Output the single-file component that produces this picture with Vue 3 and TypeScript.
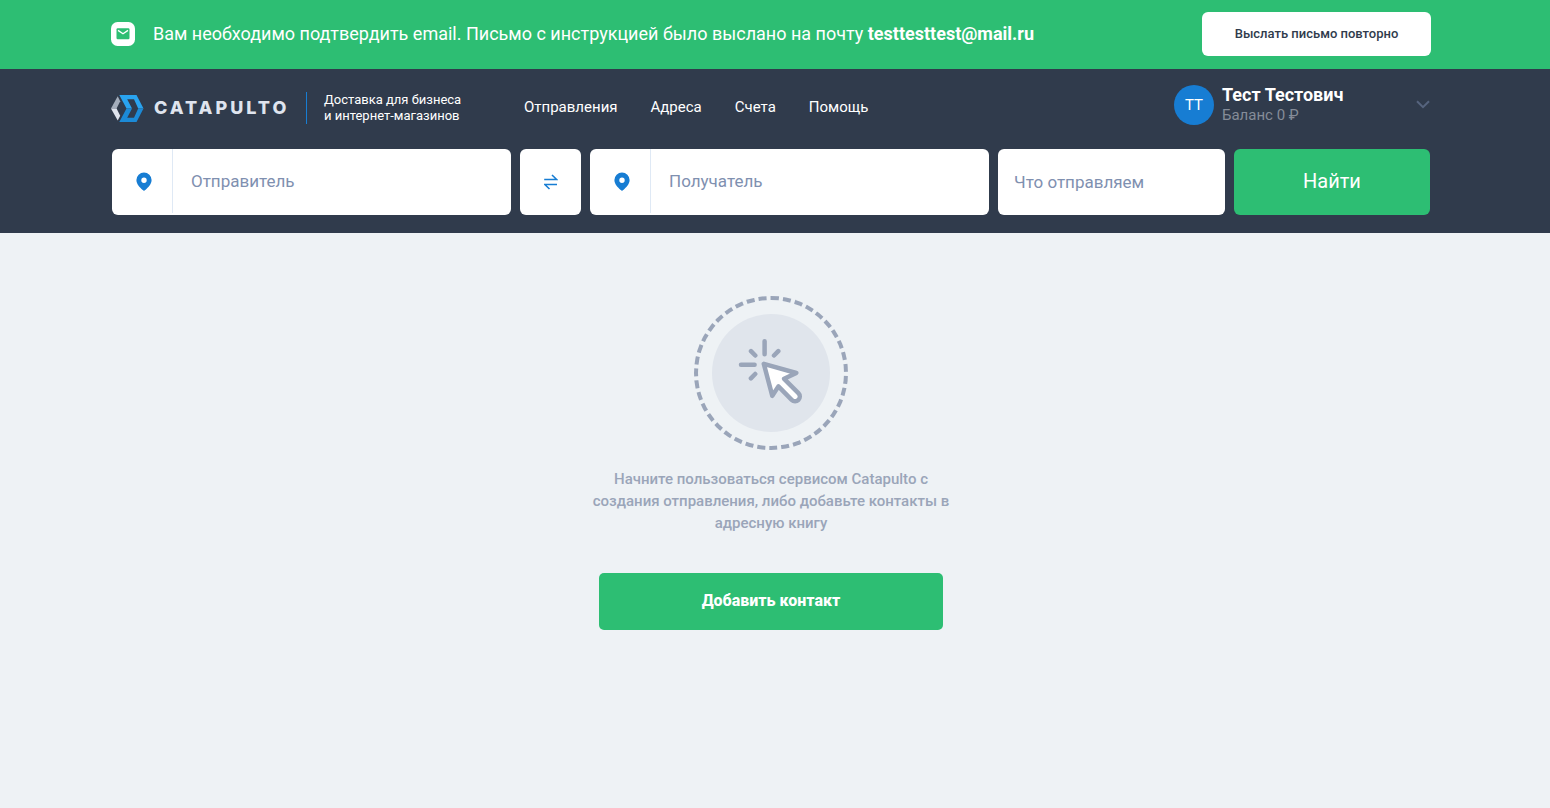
<script setup lang="ts">
import { ref } from 'vue'

interface NavItem {
  label: string
  href: string
}

const navItems: NavItem[] = [
  { label: 'Отправления', href: '#shipments' },
  { label: 'Адреса', href: '#addresses' },
  { label: 'Счета', href: '#invoices' },
  { label: 'Помощь', href: '#help' },
]

const email = 'testtesttest@mail.ru'
const sender = ref('')
const recipient = ref('')
const cargo = ref('')

const pinPath =
  'M8 .5A7.6 7.6 0 0 0 .4 8.1c0 4 3.2 7.2 6.3 10a2 2 0 0 0 2.6 0c3.1-2.8 6.3-6 6.3-10A7.6 7.6 0 0 0 8 .5zm0 5a2.7 2.7 0 1 1 0 5.4 2.7 2.7 0 0 1 0-5.4z'

function swapPoints(): void {
  const previous = sender.value
  sender.value = recipient.value
  recipient.value = previous
}
</script>

<template>
  <div class="page">
    <div class="notice">
      <div class="container notice-row">
        <svg class="notice-icon" viewBox="0 0 24 24" aria-hidden="true">
          <rect width="24" height="24" rx="6.5" fill="#fff" />
          <rect x="5.5" y="6.3" width="13" height="11" rx="1.2" fill="#2dbe73" />
          <path d="M7 8.4l5 3.4 5-3.4" fill="none" stroke="#fff" stroke-width="1.3" />
        </svg>
        <p class="notice-text">
          Вам необходимо подтвердить email. Письмо с инструкцией было выслано на почту
          <strong>{{ email }}</strong>
        </p>
        <button class="resend" type="button">Выслать письмо повторно</button>
      </div>
    </div>

    <header class="header">
      <div class="container top-row">
        <a class="logo" href="#home">
          <svg class="logo-mark" viewBox="0 0 33 27" aria-hidden="true">
            <path d="M6.7 1.3L0 13.5h5.6l3.6-7.2z" fill="#a3adbb" />
            <path d="M0 13.5l6.7 12 2.5-4.8-3.6-7.2z" fill="#dfe4ee" />
            <path d="M8.3 0h17.2l7 13.5h-5.3L23 4.2h-6.8l4.8 9.3h-5.5z" fill="#29a3ef" />
            <path d="M8.3 27h17.2l7-13.5h-5.3L23 22.8h-6.8l4.8-9.3h-5.5z" fill="#1c8ad6" />
          </svg>
          <span class="logo-name">CATAPULTO</span>
        </a>
        <p class="tagline">Доставка для бизнеса<br />и интернет-магазинов</p>
        <nav class="nav">
          <a v-for="item in navItems" :key="item.href" :href="item.href">{{ item.label }}</a>
        </nav>
        <button class="user" type="button">
          <span class="avatar">ТТ</span>
          <span class="user-info">
            <span class="user-name">Тест Тестович</span>
            <span class="user-balance">Баланс 0 ₽</span>
          </span>
          <svg class="chevron" viewBox="0 0 14 9" aria-hidden="true">
            <path d="M1 1.2l6 6 6-6" fill="none" stroke="#56647e" stroke-width="2" />
          </svg>
        </button>
      </div>

      <form class="container search" @submit.prevent>
        <label class="point">
          <span class="point-icon">
            <svg viewBox="0 0 16 19" aria-hidden="true">
              <path :d="pinPath" fill="#177dd3" />
            </svg>
          </span>
          <input v-model="sender" type="text" placeholder="Отправитель" aria-label="Отправитель" />
        </label>
        <button class="swap" type="button" aria-label="Поменять местами" @click="swapPoints">
          <svg viewBox="0 0 14 16" aria-hidden="true">
            <path d="M.2 5.5h12.500L8 1M13 10.500H.8L5.500 15" fill="none" stroke="#177dd3" stroke-width="1.600" />
          </svg>
        </button>
        <label class="point">
          <span class="point-icon">
            <svg viewBox="0 0 16 19" aria-hidden="true">
              <path :d="pinPath" fill="#177dd3" />
            </svg>
          </span>
          <input v-model="recipient" type="text" placeholder="Получатель" aria-label="Получатель" />
        </label>
        <input v-model="cargo" class="cargo" type="text" placeholder="Что отправляем" aria-label="Что отправляем" />
        <button class="find" type="submit">Найти</button>
      </form>
    </header>

    <main class="empty">
      <div class="ring">
        <div class="disc">
          <svg viewBox="18 18 118 118" aria-hidden="true">
            <g fill="none" stroke="#9aa5b9" stroke-width="4.5" stroke-linecap="round" stroke-linejoin="round">
              <path d="M70.6 45.3v13M47 68.7h13.6M57 55.2l4.3 4.3M80 59.5l4.3-4.3M61.2 78l-4.3 4.3" />
              <path d="M69.8 67.8l32.5 9.2-12.2 5.8 14.3 14.3a4.7 4.7 0 0 1-6.7 6.7L84.4 90.4 78.3 99.8z" fill="#fff" />
            </g>
          </svg>
        </div>
      </div>
      <p class="empty-text">
        Начните пользоваться сервисом Catapulto с создания отправления, либо добавьте контакты в адресную книгу
      </p>
      <button class="add" type="button">Добавить контакт</button>
    </main>
  </div>
</template>

<style>
html,
body {
  margin: 0;
  background: #eef2f5;
}
</style>

<style scoped>
.page {
  min-height: 100vh;
  font-family: Roboto, "Liberation Sans", sans-serif;
  color: #fff;
  background: #eef2f5;
}

.page * {
  box-sizing: border-box;
}

p {
  margin: 0;
}

button,
input {
  min-width: 0;
  border: 0;
  padding: 0;
  font-family: inherit;
}

button {
  cursor: pointer;
}

a {
  color: inherit;
  text-decoration: none;
}

svg {
  display: block;
  flex: none;
}

.notice,
.header,
.empty {
  padding-right: 8px;
}

.container {
  max-width: 1320px;
  margin: 0 auto;
}

.notice {
  background: #2dbe73;
}

.notice-row {
  display: flex;
  align-items: center;
  min-height: 69px;
  padding-bottom: 1px;
}

.notice-icon {
  width: 24px;
  height: 24px;
}

.notice-text {
  flex: 1;
  margin-left: 18px;
  font-size: 18px;
  line-height: 24px;
}

.notice-text strong {
  font-weight: 700;
}

.resend {
  width: 229px;
  height: 44px;
  padding-bottom: 2px;
  border-radius: 6px;
  background: #fff;
  color: #303b4c;
  font-size: 13px;
  font-weight: 500;
}

.header {
  padding-bottom: 18px;
  background: #303b4c;
}

.top-row {
  display: flex;
  align-items: center;
  height: 80px;
  padding-bottom: 3px;
}

.logo {
  display: flex;
  align-items: center;
  width: 195px;
  padding-top: 1px;
}

.logo-mark {
  width: 33px;
  height: 27px;
}

.logo-name {
  margin-left: 10px;
  color: #dfe4ee;
  font-family: Inter, Roboto, sans-serif;
  font-size: 18px;
  font-weight: 800;
  line-height: 24px;
  letter-spacing: 3px;
}

.tagline {
  width: 218px;
  padding-left: 17px;
  border-left: 1px solid #177dd3;
  font-size: 13px;
  line-height: 16px;
}

.nav {
  display: flex;
  flex: 1;
  gap: 33px;
  padding-bottom: 2px;
  font-size: 15px;
  line-height: 20px;
}

.user {
  display: flex;
  align-items: center;
  align-self: flex-start;
  width: 257px;
  margin-top: 15px;
  padding-right: 1px;
  background: none;
  color: #fff;
  text-align: left;
}

.avatar {
  display: grid;
  place-items: center;
  width: 40px;
  height: 40px;
  border-radius: 50%;
  background: #177dd3;
  font-size: 15px;
}

.user-info {
  display: flex;
  flex: 1;
  flex-direction: column;
  margin-left: 8px;
  padding-top: 1px;
}

.user-name {
  font-size: 18px;
  font-weight: 700;
  line-height: 20px;
}

.user-balance {
  color: #858c98;
  font-size: 15px;
  line-height: 20px;
}

.chevron {
  width: 14px;
  height: 9px;
}

.search {
  display: grid;
  grid-template-columns: 399fr 61fr 399fr 227fr 196fr;
  gap: 9px;
  padding: 0 1px;
}

.search > * {
  height: 66px;
  border-radius: 6px;
  background: #fff;
}

.point {
  display: flex;
  overflow: hidden;
}

.point-icon {
  display: grid;
  place-items: center;
  flex: none;
  width: 61px;
  height: 64px;
  padding-left: 4px;
  border-right: 1px solid #dfe9f5;
}

.point-icon svg {
  width: 16px;
  height: 19px;
}

.point input {
  flex: 1;
  padding: 0 18px 2px;
  background: none;
}

.search input {
  color: #303b4c;
  font-size: 17px;
}

.search input::placeholder {
  color: #7f90b0;
  opacity: 1;
}

.cargo {
  padding: 0 16px;
}

.swap {
  display: grid;
  place-items: center;
}

.swap svg {
  width: 14px;
  height: 16px;
}

.search .find {
  padding-bottom: 3px;
  background: #2dbe73;
  color: #fff;
  font-size: 20px;
}

.empty {
  display: flex;
  flex-direction: column;
  align-items: center;
  padding-top: 63px;
}

.ring {
  padding: 14px;
  border: 4px dashed #9aa5b9;
  border-radius: 50%;
}

.disc {
  width: 118px;
  height: 118px;
  border-radius: 50%;
  background: #e0e5ec;
}

.empty-text {
  width: 368px;
  margin-top: 18px;
  color: #9aa5b9;
  font-size: 15px;
  font-weight: 500;
  line-height: 22px;
  text-align: center;
}

.add {
  width: 344px;
  height: 57px;
  margin-top: 39px;
  padding-bottom: 2px;
  border-radius: 5px;
  background: #2dbe73;
  color: #fff;
  font-size: 16px;
  font-weight: 800;
}
</style>
